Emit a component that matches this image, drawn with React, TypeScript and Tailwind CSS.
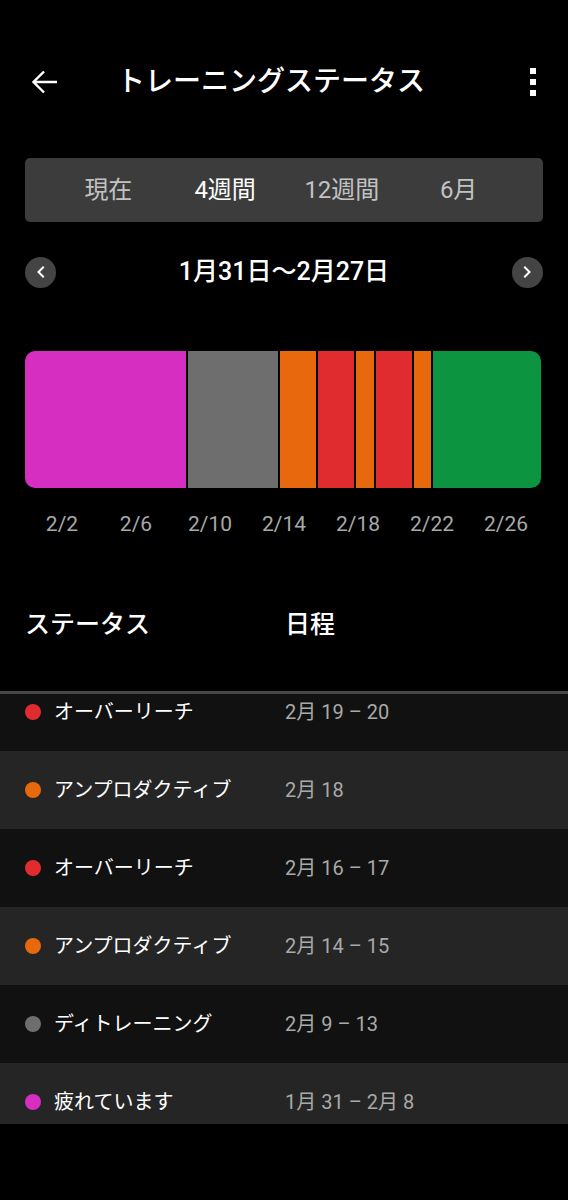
const segments = [
  { days: 9, color: "bg-[#d52ec1]" },
  { days: 5, color: "bg-[#6e6e6e]" },
  { days: 2, color: "bg-[#e8680e]" },
  { days: 2, color: "bg-[#e02c2f]" },
  { days: 1, color: "bg-[#e8680e]" },
  { days: 2, color: "bg-[#e02c2f]" },
  { days: 1, color: "bg-[#e8680e]" },
  { days: 6, color: "bg-[#0c9441]" },
];

const ticks = ["2/2", "2/6", "2/10", "2/14", "2/18", "2/22", "2/26"];

const rows = [
  { label: "オーバーリーチ", date: "2月 19 – 20", dot: "bg-[#e02c2f]" },
  { label: "アンプロダクティブ", date: "2月 18", dot: "bg-[#e8680e]" },
  { label: "オーバーリーチ", date: "2月 16 – 17", dot: "bg-[#e02c2f]" },
  { label: "アンプロダクティブ", date: "2月 14 – 15", dot: "bg-[#e8680e]" },
  { label: "ディトレーニング", date: "2月 9 – 13", dot: "bg-[#6e6e6e]" },
  { label: "疲れています", date: "1月 31 – 2月 8", dot: "bg-[#d52ec1]" },
];

function Chevron({ dir }: { dir: "left" | "right" }) {
  return (
    <svg width="10" height="12" viewBox="0 0 10 12" fill="none">
      <polyline
        points={dir === "left" ? "7,1.5 2.5,6 7,10.5" : "3,1.5 7.5,6 3,10.5"}
        stroke="white"
        strokeWidth="2"
        strokeLinecap="square"
      />
    </svg>
  );
}

export default function App() {
  return (
    <div className="min-h-[1200px] w-full bg-black text-white pt-[56px] font-['Roboto','Noto_Sans_CJK_JP',sans-serif]">
      {/* header */}
      <div className="flex items-center h-[52px] pl-[32px] pr-[32px]">
        <svg width="26" height="24" viewBox="0 0 26 24" fill="none">
          <path d="M25 12H2M12 1.5 1.5 12 12 22.5" stroke="white" strokeWidth="2.4" />
        </svg>
        <h1 className="ml-[59px] text-[28px] leading-none font-medium">トレーニングステータス</h1>
        <div className="ml-auto flex flex-col gap-[5px]">
          <div className="w-[6px] h-[6px] bg-white" />
          <div className="w-[6px] h-[6px] bg-white" />
          <div className="w-[6px] h-[6px] bg-white" />
        </div>
      </div>

      {/* period tabs */}
      <div className="mx-[25px] mt-[50px] h-[64px] rounded-[5px] bg-[#3c3c3c] grid grid-cols-4 items-center pl-[25px] pr-[26px] text-[24px]">
        <span className="text-center text-[#c2c2c2]">現在</span>
        <span className="text-center text-white">4週間</span>
        <span className="text-center text-[#c2c2c2]">12週間</span>
        <span className="text-center text-[#c2c2c2]">6月</span>
      </div>

      {/* date nav */}
      <div className="mx-[25px] mt-[34px] flex items-center justify-between">
        <button className="w-[31px] h-[31px] rounded-full bg-[#444444] flex items-center justify-center">
          <Chevron dir="left" />
        </button>
        <span className="text-[25px] leading-[32px] font-medium">1月31日〜2月27日</span>
        <button className="w-[31px] h-[31px] rounded-full bg-[#444444] flex items-center justify-center">
          <Chevron dir="right" />
        </button>
      </div>

      {/* bar */}
      <div className="ml-[25px] mr-[27px] mt-[63px] h-[137px] flex gap-[2px] rounded-[10px] overflow-hidden">
        {segments.map((s, i) => (
          <div key={i} className={s.color} style={{ flexGrow: s.days, flexBasis: 0 }} />
        ))}
      </div>

      <div className="mx-[25px] mt-[23px] grid grid-cols-7 text-[21px] leading-[26px] text-[#a8a8a8]">
        {ticks.map((t) => (
          <span key={t} className="text-center">{t}</span>
        ))}
      </div>

      {/* list header */}
      <div className="mt-[70px] flex px-[25px] text-[25px] leading-[36px] font-medium">
        <span className="w-[260px]">ステータス</span>
        <span>日程</span>
      </div>

      <div className="mt-[48px] h-[3px] bg-[#464646]" />

      <div className="h-[430px] overflow-hidden">
        <div className="-mt-[21px]">
          {rows.map((r, i) => (
            <div
              key={i}
              className={`h-[78px] flex items-center px-[25px] ${i % 2 === 0 ? "bg-[#111111]" : "bg-[#252525]"}`}
            >
              <div className={`w-[16px] h-[16px] rounded-full ${r.dot}`} />
              <span className="ml-[13px] w-[231px] text-[20px]">{r.label}</span>
              <span className="text-[20px] text-[#a9a9a9]">{r.date}</span>
            </div>
          ))}
        </div>
      </div>
    </div>
  );
}
